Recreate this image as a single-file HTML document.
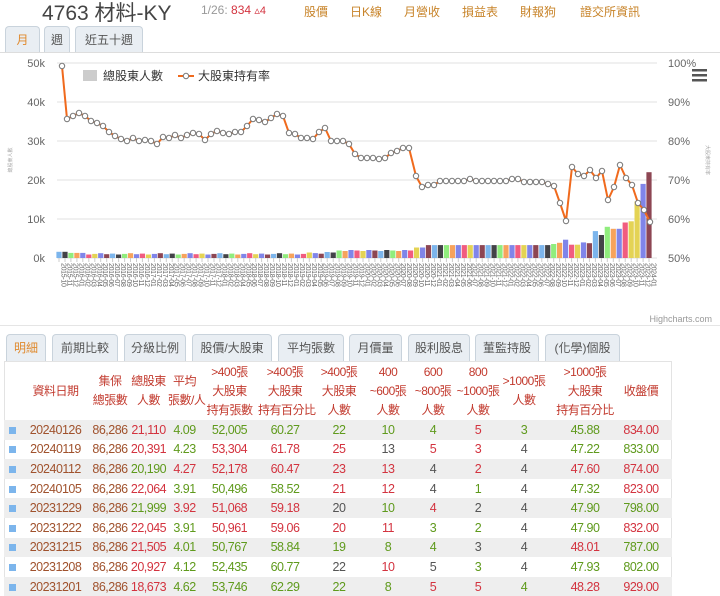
<!DOCTYPE html>
<html><head><meta charset="utf-8">
<style>
*{margin:0;padding:0;box-sizing:border-box}
body{width:720px;height:596px;overflow:hidden;background:#fff;font-family:"Liberation Sans","Noto Sans CJK TC",sans-serif;position:relative}
.abs{position:absolute}
.title{left:42px;top:-3px;font-size:21px;color:#444;white-space:nowrap}
.sub{top:3px;font-size:12px;color:#c8842a;white-space:nowrap}
.tab{position:absolute;height:27px;border:1px solid #c9d3dc;border-bottom:none;border-radius:4px 4px 0 0;background:#e9eef3;font-size:12px;color:#555;text-align:center;line-height:26px}
.tab.on{color:#e08a2e}
table{position:absolute;left:4px;top:362px;border-collapse:collapse;font-size:12.5px;table-layout:fixed;width:668px;letter-spacing:-0.5px}
th{font-weight:normal;color:#c23a2e;font-size:12px;line-height:19px;text-align:center;vertical-align:middle;white-space:nowrap;overflow:visible}
td{height:19.6px;text-align:center;white-space:nowrap;padding:0;overflow:visible}
tr.a td{background:#eeeeee}
.b{color:#a0522d}.r{color:#d3333f}.g{color:#5f9a1c}.k{color:#555}
.sq{display:inline-block;width:7px;height:7px;background:#7cb5ec}
</style></head><body>
<div class="abs title">4763 材料-KY</div>
<div class="abs sub" style="left:201px;color:#999">1/26: <span style="color:#d3333f">834 <span style="font-size:11px">▵4</span></span></div>
<div class="abs sub" style="left:304px">股價</div>
<div class="abs sub" style="left:350px">日K線</div>
<div class="abs sub" style="left:404px">月營收</div>
<div class="abs sub" style="left:462px">損益表</div>
<div class="abs sub" style="left:520px">財報狗</div>
<div class="abs sub" style="left:580px">證交所資訊</div>
<div class="tab on" style="left:5px;top:26px;width:35px">月</div>
<div class="tab" style="left:44px;top:26px;width:26px">週</div>
<div class="tab" style="left:75px;top:26px;width:68px">近五十週</div>
<div class="abs" style="left:0;top:52px;width:720px;height:1px;background:#ddd"></div>

<svg class="abs" style="left:0;top:0" width="720" height="330" id="ch" font-family="Liberation Sans, Noto Sans CJK TC, sans-serif"></svg>

<div class="abs" style="left:0;top:325px;width:720px;height:1px;background:#e5e5e5"></div>
<div class="tab on" style="left:6px;top:334px;width:40px">明細</div>
<div class="tab" style="left:52px;top:334px;width:66px">前期比較</div>
<div class="tab" style="left:124px;top:334px;width:62px">分級比例</div>
<div class="tab" style="left:192px;top:334px;width:80px">股價/大股東</div>
<div class="tab" style="left:278px;top:334px;width:66px">平均張數</div>
<div class="tab" style="left:349px;top:334px;width:53px">月價量</div>
<div class="tab" style="left:408px;top:334px;width:62px">股利股息</div>
<div class="tab" style="left:475px;top:334px;width:64px">董監持股</div>
<div class="tab" style="left:545px;top:334px;width:75px">(化學)個股</div>
<div class="abs" style="left:4px;top:361px;width:668px;height:235px;border:1px solid #e3e3e3;border-bottom:none"></div>
<table id="tb">
<colgroup><col style="width:16px"><col style="width:71px"><col style="width:38px"><col style="width:39px"><col style="width:33px"><col style="width:57px"><col style="width:54px"><col style="width:54px"><col style="width:44px"><col style="width:46px"><col style="width:44px"><col style="width:48px"><col style="width:74px"><col style="width:38px"><col style="width:12px"></colgroup>
<tr style="height:58px"><th></th><th>資料日期</th><th>集保<br>總張數</th><th>總股東<br>人數</th><th>平均<br>張數/人</th><th>&gt;400張<br>大股東<br>持有張數</th><th>&gt;400張<br>大股東<br>持有百分比</th><th>&gt;400張<br>大股東<br>人數</th><th>400<br>~600張<br>人數</th><th>600<br>~800張<br>人數</th><th>800<br>~1000張<br>人數</th><th>&gt;1000張<br>人數</th><th>&gt;1000張<br>大股東<br>持有百分比</th><th>收盤價</th><th></th></tr>
</table>
<script>
var rows=[
["20240126","21,110r","4.09g","52,005g","60.27g","22g","10g","4g","5r","3g","45.88g","834.00r"],
["20240119","20,391r","4.23g","53,304r","61.78r","25r","13k","5r","3r","4k","47.22g","833.00g"],
["20240112","20,190g","4.27r","52,178r","60.47r","23r","13r","4k","2r","4k","47.60r","874.00r"],
["20240105","22,064r","3.91g","50,496g","58.52g","21r","12r","4k","1g","4k","47.32g","823.00r"],
["20231229","21,999g","3.92r","51,068r","59.18r","20k","10g","4r","2k","4k","47.90g","798.00g"],
["20231222","22,045r","3.91g","50,961r","59.06r","20r","11r","3g","2g","4k","47.90g","832.00r"],
["20231215","21,505r","4.01g","50,767g","58.84g","19g","8g","4g","3k","4k","48.01r","787.00g"],
["20231208","20,927r","4.12g","52,435g","60.77g","22k","10r","5k","3g","4k","47.93g","802.00g"],
["20231201","18,673r","4.62g","53,746g","62.29g","22g","8g","5r","5r","4g","48.28r","929.00r"]];
var tb=document.getElementById('tb'),h='';
rows.forEach(function(r,i){h+='<tr class="'+(i%2==0?'a':'')+'"><td><span class="sq"></span></td><td class="b">'+r[0]+'</td><td class="b">86,286</td>';
for(var j=1;j<r.length;j++){var v=r[j];h+='<td class="'+v.slice(-1)+'">'+v.slice(0,-1)+'</td>';}h+='<td></td></tr>';});
tb.insertAdjacentHTML('beforeend',h);

var s='';
[63,102,141,180,219,258].forEach(function(y,i){s+='<line x1="57" x2="657" y1="'+y+'" y2="'+y+'" stroke="#e0e0e0"/>';
s+='<text x="45" y="'+(y+4)+'" font-size="11" fill="#666" text-anchor="end">'+((5-i)*10)+'k</text>';
s+='<text x="668" y="'+(y+4)+'" font-size="11" fill="#666">'+(100-i*10)+'%</text>';});
s+='<text transform="translate(12,160) rotate(-90)" font-size="5" fill="#aaa" text-anchor="middle">總股東人數</text>';
s+='<text transform="translate(706,160) rotate(90)" font-size="5" fill="#aaa" text-anchor="middle">大股東持有率</text>';
var H=[];for(var i=0;i<100;i++){var v=0.9+((i*7)%5)*0.08;
if(i<2)v=1.6;else if(i<5)v=1.3;else if(i>=42&&i<47)v=1.1+((i*3)%4)*0.15;else if(i>=47&&i<60)v=1.8+((i*5)%3)*0.12;else if(i>=60&&i<62)v=2.7;else if(i>=62&&i<85)v=3.3+((i*3)%3)*0.1;H.push(v);}
var tail=[3.6,3.9,4.7,3.4,3.4,4,3.8,6.9,5.9,8,7.5,7.5,9.1,9.4,14.5,19,22];
for(var k=0;k<tail.length;k++)H[83+k]=tail[k];
var C=['#7cb5ec','#434348','#90ed7d','#f7a35c','#8085e9','#f15c80','#e4d354','#8085e9','#8d4653'];
for(var i=0;i<100;i++){var x=59+i*5.96,hh=H[i]*3.9,c=C[i%9];if(i==97)c='#e4d354';if(i==98)c='#8085e9';if(i==99)c='#8d4653';
s+='<rect x="'+(x-2.6).toFixed(1)+'" y="'+(258-hh).toFixed(1)+'" width="5.2" height="'+hh.toFixed(1)+'" fill="'+c+'"/>';
s+='<line x1="'+x.toFixed(1)+'" x2="'+x.toFixed(1)+'" y1="258" y2="262" stroke="#ccc"/>';
var yr=2015+Math.floor((i+9)/12),mo=((i+9)%12)+1;
s+='<text transform="translate('+(x+2.5).toFixed(1)+',263) rotate(90)" font-size="7" fill="#666" letter-spacing="-0.3">'+yr+'-'+(mo<10?'0':'')+mo+'</text>';}
var P=[[62,66],[67,119],[73,116],[79,113],[85,116],[91,121],[97,123],[103,126],[109,132],[115,136],[121,139],[127,141],[133,138],[139,141],[145,140],[151,141],[157,144],[163,137],[169,138],[175,135],[181,138],[187,135],[193,133],[199,134],[205,140],[211,134],[217,131],[223,133],[229,134],[235,132],[241,132],[247,126],[253,119],[259,120],[265,122],[271,118],[277,114],[283,116],[289,133],[295,134],[301,138],[307,138],[313,139],[319,132],[325,128],[331,141],[337,141],[343,141],[349,144],[355,154],[361,158],[367,158],[373,158],[379,159],[385,158],[391,153],[397,151],[403,148],[409,148],[416,176],[422,187],[428,185],[434,185],[440,181],[446,181],[452,181],[458,181],[464,181],[470,179],[476,181],[482,181],[488,181],[494,181],[500,181],[506,181],[512,179],[518,179],[524,182],[530,182],[536,182],[542,182],[548,184],[554,186],[560,203],[566,221],[572,167],[578,174],[584,176],[590,170],[596,178],[602,171],[608,200],[614,187],[620,165],[626,178],[632,185],[638,203],[644,210],[650,222]];
s+='<polyline fill="none" stroke="#f06a1d" stroke-width="2" points="'+P.map(function(p){return p.join(',')}).join(' ')+'"/>';
P.forEach(function(p){s+='<circle cx="'+p[0]+'" cy="'+p[1]+'" r="2.7" fill="#fff" stroke="#777" stroke-width="1"/>';});
s+='<rect x="83" y="70" width="14" height="11" fill="#ccc"/><text x="103" y="80" font-size="12" fill="#333">總股東人數</text>';
s+='<line x1="178" x2="194" y1="76" y2="76" stroke="#f06a1d" stroke-width="2"/><circle cx="186" cy="76" r="2.7" fill="#fff" stroke="#777"/><text x="198" y="80" font-size="12" fill="#333">大股東持有率</text>';
s+='<rect x="692" y="69" width="15" height="2.5" fill="#555"/><rect x="692" y="74" width="15" height="2.5" fill="#555"/><rect x="692" y="79" width="15" height="2.5" fill="#555"/>';
s+='<text x="712" y="322" font-size="9" fill="#999" text-anchor="end">Highcharts.com</text>';
document.getElementById('ch').innerHTML=s;
</script>
</body></html>
